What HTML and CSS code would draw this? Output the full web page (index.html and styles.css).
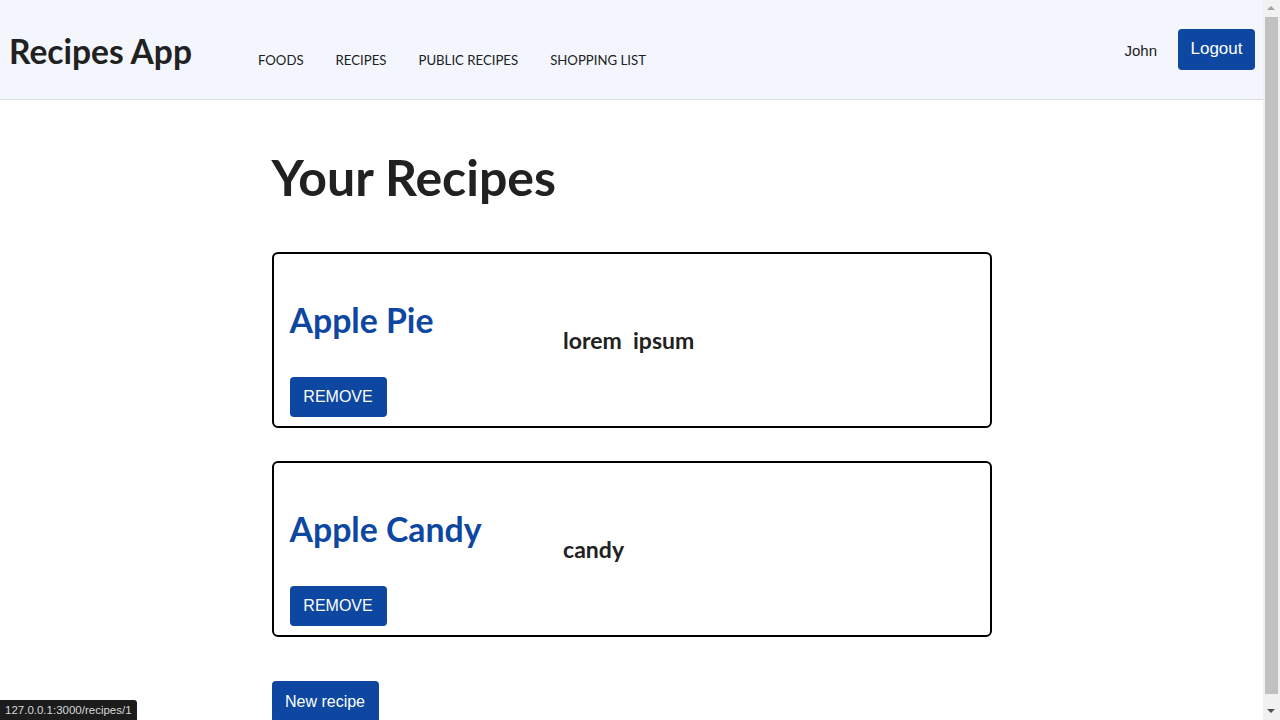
FILE: index.html
```html
<!DOCTYPE html>
<html lang="en">
<head>
<meta charset="utf-8">
<title>Recipes App</title>
<link rel="stylesheet" href="styles.css">
</head>
<body>
<div class="page">
  <header class="topbar">
    <div class="brand">Recipes App</div>
    <nav class="nav">
      <a class="nav-link" href="#">FOODS</a>
      <a class="nav-link" href="#">RECIPES</a>
      <a class="nav-link" href="#">PUBLIC RECIPES</a>
      <a class="nav-link" href="#">SHOPPING LIST</a>
    </nav>
    <div class="user">
      <span class="user-name">John</span>
      <button class="btn btn-logout">Logout</button>
    </div>
  </header>
  <main class="container">
    <h1 class="page-title">Your Recipes</h1>
    <section class="recipe-card">
      <div class="recipe-main">
        <h2 class="recipe-name"><a href="#">Apple Pie</a></h2>
        <button class="btn btn-remove">REMOVE</button>
      </div>
      <div class="recipe-desc">lorem&nbsp; ipsum</div>
    </section>
    <section class="recipe-card">
      <div class="recipe-main">
        <h2 class="recipe-name"><a href="#">Apple Candy</a></h2>
        <button class="btn btn-remove">REMOVE</button>
      </div>
      <div class="recipe-desc">candy</div>
    </section>
    <button class="btn btn-new">New recipe</button>
  </main>
</div>
<div class="scrollbar">
  <span class="arrow arrow-up"></span>
  <span class="thumb"></span>
  <span class="arrow arrow-down"></span>
</div>
<div class="status-bar">127.0.0.1:3000/recipes/1</div>
</body>
</html>
```
FILE: styles.css
```css
html, body {
  margin: 0;
  padding: 0;
}
body {
  font-family: "Lato", "Open Sans", sans-serif;
  color: #212121;
  background: #ffffff;
}
.page {
  margin-right: 17px;
}
.topbar {
  height: 99px;
  background: #f3f6fd;
  border-bottom: 1px solid #dcdce2;
  display: flex;
  align-items: center;
  padding: 0 8px 0 9px;
}
.brand {
  font-size: 33.5px;
  font-weight: 700;
  color: #212121;
  padding-top: 2px;
}
.nav {
  display: flex;
  gap: 32px;
  margin-left: 66px;
  padding-top: 20px;
}
.nav-link {
  font-size: 13.2px;
  font-weight: 400;
  color: #212121;
  text-decoration: none;
}
.user {
  margin-left: auto;
  display: flex;
  align-items: center;
  gap: 21px;
}
.user-name {
  font-size: 15px;
  color: #212121;
  font-family: "Liberation Sans", Arial, sans-serif;
  padding-top: 2px;
}
.btn {
  background: #0d47a1;
  color: #ffffff;
  border: none;
  border-radius: 4px;
  font-family: "Liberation Sans", Arial, sans-serif;
  font-size: 16px;
  cursor: pointer;
}
.btn-logout {
  width: 77px;
  height: 41px;
  font-size: 17px;
  padding: 0;
  margin-bottom: 1px;
}
.container {
  max-width: 720px;
  margin: 0 auto;
  padding: 0 0 40px;
}
.page-title {
  font-size: 50px;
  font-weight: 700;
  line-height: 58px;
  margin: 48px 0 46px;
}
.recipe-card {
  border: 2px solid #000000;
  border-radius: 6px;
  display: flex;
  align-items: center;
  padding: 0 16px 9px;
  margin-bottom: 33px;
}
.recipe-main {
  width: 40%;
  display: flex;
  flex-direction: column;
  align-items: flex-start;
}
.recipe-name {
  font-size: 33.8px;
  font-weight: 700;
  line-height: 40px;
  margin: 46px 0 37px;
}
.recipe-name a {
  color: #0d47a1;
  text-decoration: none;
}
.recipe-desc {
  font-size: 23px;
  font-weight: 700;
  padding-top: 8px;
}
.btn-remove {
  width: 97px;
  height: 40px;
  padding: 0;
}
.btn-new {
  width: 107px;
  height: 42px;
  margin-top: 11px;
  padding: 0;
}
.scrollbar {
  position: fixed;
  top: 0;
  right: 0;
  width: 17px;
  height: 100%;
  background: #f1f1f1;
}
.thumb {
  position: absolute;
  left: 2px;
  top: 17px;
  width: 13px;
  height: 677px;
  background: #c1c1c1;
}
.arrow {
  position: absolute;
  left: 4px;
  width: 0;
  height: 0;
  border-left: 4.5px solid transparent;
  border-right: 4.5px solid transparent;
}
.arrow-up {
  top: 6px;
  border-bottom: 4.5px solid #a3a3a3;
}
.arrow-down {
  bottom: 7px;
  border-top: 4.5px solid #505050;
}
.status-bar {
  position: fixed;
  left: 0;
  bottom: 0;
  height: 20px;
  padding: 0 5px;
  background: #1c1c1c;
  color: #d8d8d8;
  font-family: "Liberation Sans", sans-serif;
  font-size: 11.5px;
  line-height: 20px;
  border-top-right-radius: 3px;
}
```
